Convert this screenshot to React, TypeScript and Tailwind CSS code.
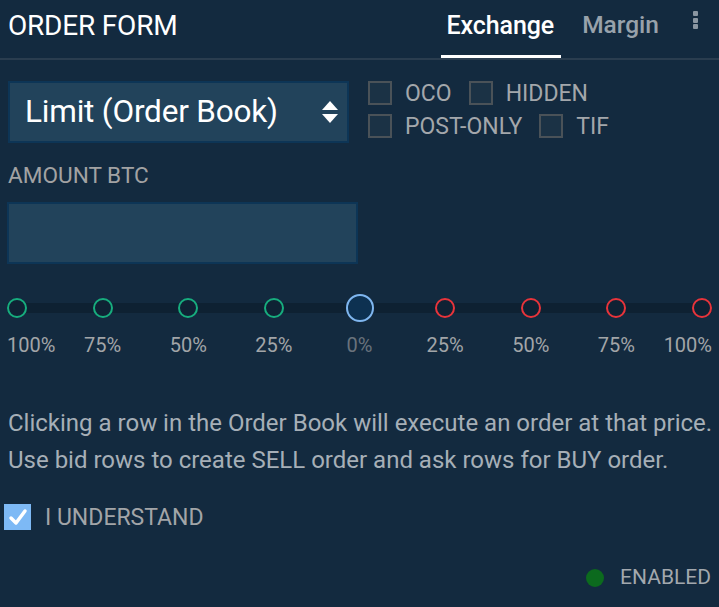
import React from "react";

const font = { fontFamily: "Roboto, 'Noto Sans', sans-serif" };

function Box({ label }: { label: string }) {
  return (
    <div className="flex items-center">
      <div className="w-[24px] h-[24px] border-2 border-[#4a5258] bg-[#1b3245]" />
      <span className="ml-[13px] text-[23px] leading-none text-[#a3a7ab]">{label}</span>
    </div>
  );
}

export default function App() {
  const steps = [
    { l: "100%", c: "g" },
    { l: "75%", c: "g" },
    { l: "50%", c: "g" },
    { l: "25%", c: "g" },
    { l: "0%", c: "b" },
    { l: "25%", c: "r" },
    { l: "50%", c: "r" },
    { l: "75%", c: "r" },
    { l: "100%", c: "r" },
  ];
  return (
    <div style={font} className="w-[719px] h-[607px] bg-[#132a3f] overflow-hidden flex flex-col">
      {/* header */}
      <div className="h-[60px] flex items-end border-b-2 border-[#2a3d4f] pl-[8px] pr-[21px]">
        <div className="h-[58px] flex items-center text-[28px] text-white tracking-[-0.2px] pb-[6px]">ORDER FORM</div>
        <div className="flex-1" />
        <div className="h-[58px] flex items-center pl-[6px] pr-[7px] border-b-[3px] border-white text-[25px] font-medium text-white pb-[4px] tracking-[-0.1px]">Exchange</div>
        <div className="h-[58px] flex items-center ml-[21px] text-[24.5px] font-medium text-[#98a2ab] pb-[7px]">Margin</div>
        <div className="h-[58px] flex flex-col items-center ml-[34px] pt-[11px] gap-[1.5px]">
          <div className="w-[5px] h-[5px] rounded-[1px] bg-[#8a96a1]" />
          <div className="w-[5px] h-[5px] rounded-[1px] bg-[#8a96a1]" />
          <div className="w-[5px] h-[5px] rounded-[1px] bg-[#8a96a1]" />
        </div>
      </div>

      {/* select + checkboxes */}
      <div className="flex mt-[21px] pl-[8px]">
        <div className="w-[341px] h-[62px] bg-[#22435b] border-2 border-[#0d3556] flex items-center pl-[15px] pr-[8px]">
          <span className="text-[31.5px] text-white leading-none flex-1 tracking-[-0.2px]">Limit (Order Book)</span>
          <svg width="18" height="24" viewBox="0 0 18 24">
            <path d="M9 1 L17 10 L1 10 Z" fill="white" />
            <path d="M9 23 L17 14 L1 14 Z" fill="white" />
          </svg>
        </div>
        <div className="ml-[19px] flex flex-col gap-[9px]">
          <div className="flex gap-[17px]">
            <Box label="OCO" />
            <Box label="HIDDEN" />
          </div>
          <div className="flex gap-[17px]">
            <Box label="POST-ONLY" />
            <Box label="TIF" />
          </div>
        </div>
      </div>

      {/* amount */}
      <div className="pl-[8px] mt-[20px] text-[22.6px] leading-[26px] text-[#a2a2a3]">AMOUNT BTC</div>
      <div className="ml-[7px] mt-[13px] w-[351px] h-[62px] bg-[#22435b] border-2 border-[#0d3556]" />

      {/* slider */}
      <div className="relative mx-[7px] mt-[29px] h-[30px] flex items-center justify-between">
        <div className="absolute left-0 right-0 top-[10px] h-[10px] bg-[#0e2132]" />
        {steps.map((s, i) =>
          s.c === "b" ? (
            <div key={i} className="relative w-[28px] h-[28px] rounded-full border-2 border-[#7fb6ef] bg-[#0d3151] -mx-[4px]" />
          ) : (
            <div
              key={i}
              className={
                "relative w-[20px] h-[20px] rounded-full border-2 bg-[#0f2234] " +
                (s.c === "g" ? "border-[#17ad7e]" : "border-[#e8343b]")
              }
            />
          )
        )}
      </div>
      <div className="mx-[7px] mt-[12px] flex justify-between text-[20px] leading-none">
        {steps.map((s, i) => (
          <div
            key={i}
            className={
              "w-[20px] flex whitespace-nowrap " +
              (i === 0 ? "justify-start" : i === 8 ? "justify-end" : "justify-center")
            }
          >
            <span className={s.c === "b" ? "text-[#69727c]" : "text-[#a2a5a8]"}>{s.l}</span>
          </div>
        ))}
      </div>

      {/* text */}
      <div className="pl-[8px] mt-[50px] text-[24px] leading-[37px] text-[#a6afb7] whitespace-nowrap">
        <div>Clicking a row in the Order Book will execute an order at that price.</div>
        <div>Use bid rows to create SELL order and ask rows for BUY order.</div>
      </div>

      <div className="flex items-center pl-[4px] mt-[25px]">
        <div className="w-[27px] h-[26px] bg-[#7db9f5] flex items-center justify-center">
          <svg width="20" height="18" viewBox="0 0 20 18">
            <path d="M3 10 L8 15 L17 3" stroke="white" strokeWidth="3.5" fill="none" strokeLinecap="round" strokeLinejoin="round" />
          </svg>
        </div>
        <span className="ml-[14px] text-[23px] leading-none text-[#a2a5a8]">I UNDERSTAND</span>
      </div>

      <div className="flex items-center justify-end pr-[8px] mt-[37px]">
        <div className="w-[18px] h-[18px] rounded-full bg-[#0c6a1e]" />
        <span className="ml-[16px] text-[21px] leading-none text-[#a2a8ae]">ENABLED</span>
      </div>
    </div>
  );
}
